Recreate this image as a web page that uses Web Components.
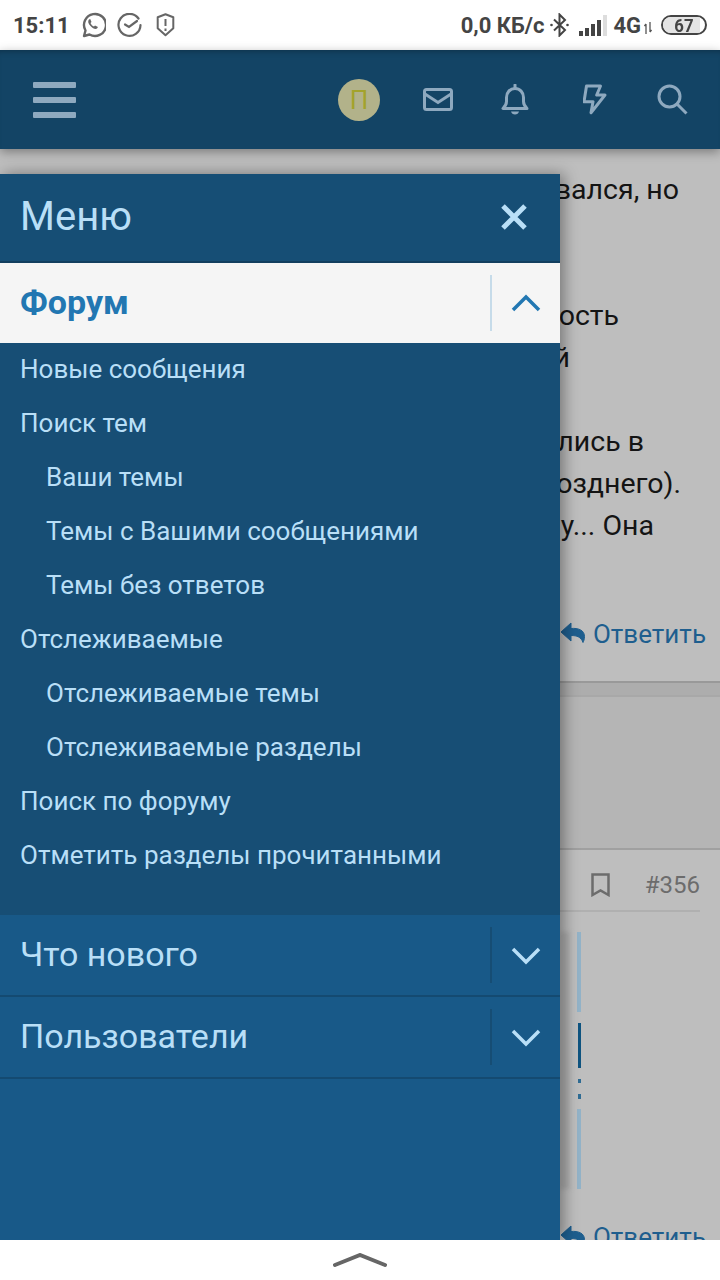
<!DOCTYPE html>
<html lang="ru">
<head>
<meta charset="utf-8">
<title>Меню</title>
<style>
  html, body { margin: 0; padding: 0; }
  body { width: 720px; height: 1280px; overflow: hidden; font-family: Roboto, "Liberation Sans", sans-serif; background: #fff; }
  app-shell { height: 1280px; }
</style>
</head>
<body>
<app-shell>
  <status-bar slot="status"></status-bar>
  <top-bar slot="top"></top-bar>
  <thread-page slot="page"></thread-page>
  <nav-panel slot="panel">
    <nav-head>Меню</nav-head>
    <nav-section open label="Форум">
      <nav-link>Новые сообщения</nav-link>
      <nav-link>Поиск тем</nav-link>
      <nav-link sub>Ваши темы</nav-link>
      <nav-link sub>Темы с Вашими сообщениями</nav-link>
      <nav-link sub>Темы без ответов</nav-link>
      <nav-link>Отслеживаемые</nav-link>
      <nav-link sub>Отслеживаемые темы</nav-link>
      <nav-link sub>Отслеживаемые разделы</nav-link>
      <nav-link>Поиск по форуму</nav-link>
      <nav-link>Отметить разделы прочитанными</nav-link>
    </nav-section>
    <nav-section label="Что нового"></nav-section>
    <nav-section label="Пользователи"></nav-section>
  </nav-panel>
  <gesture-bar slot="gesture"></gesture-bar>
</app-shell>

<script>
  class AppShell extends HTMLElement {
    constructor() {
      super();
      this.attachShadow({ mode: 'open' });
      this.shadowRoot.innerHTML = `
        <style>
          :host { display: flex; flex-direction: column; }
          .main { position: relative; flex: 1; overflow: hidden; background: #bebebe; min-height: 0; }
          .over { position: absolute; left: 0; top: 25px; bottom: 0; width: 560px; display: flex; }
        </style>
        <slot name="status"></slot>
        <slot name="top"></slot>
        <div class="main">
          <slot name="page"></slot>
          <div class="over"><slot name="panel"></slot></div>
        </div>
        <slot name="gesture"></slot>
      `;
    }
  }

  class StatusBar extends HTMLElement {
    constructor() {
      super();
      this.attachShadow({ mode: 'open' });
      this.shadowRoot.innerHTML = `
        <style>
          :host { display: flex; align-items: center; height: 50px; background: #fff; color: #444; font: 700 22px Roboto, sans-serif; padding: 0 13px; box-sizing: border-box; }
          svg { display: block; flex: none; }
          .time { margin-right: 11px; }
          .left { display: flex; align-items: center; }
          .right { margin-left: auto; display: flex; align-items: center; }
          .batt { position: relative; width: 46px; height: 20px; box-sizing: border-box; border: 2.5px solid #444; border-radius: 10px; margin-left: 9px; display: flex; align-items: center; justify-content: center; font: 700 19px Roboto, sans-serif; overflow: hidden; }
          .batt i { position: absolute; left: 0; top: 0; bottom: 0; width: 88%; background: #e4e4e4; }
          .batt span { position: relative; transform: scaleX(.88); }
        </style>
        <div class="left">
          <span class="time">15:11</span>
          <svg width="25" height="26" viewBox="0 0 25 26" fill="none" stroke="#666" stroke-width="2.4">
            <path d="M3 24l1.500-5.500A11 11 0 1 1 8.500 22.500z" stroke-linejoin="round"/>
            <path d="M8 7.500c-1.500 1.500-.8 4 1.500 6.500s5 3.500 6.500 2.500l1-1.500-3-1.500-1 1c-1.500-.5-3-2-3.500-3.500l1-1-1.300-3z" fill="#666" stroke="none"/>
          </svg>
          <svg width="25" height="25" viewBox="0 0 25 25" fill="none" stroke="#666" stroke-width="2.200" stroke-linecap="round" style="margin-left:11px">
            <path d="M21.500 5.500A11 11 0 1 0 23.500 12"/>
            <path d="M8 11.500l4 2.500 8-6"/>
          </svg>
          <svg width="19" height="24" viewBox="0 0 19 24" fill="none" stroke="#666" stroke-width="2" style="margin-left:14px">
            <path d="M9.500 1.200l7.800 3v11l-7.800 7-7.800-7v-11z" stroke-linejoin="round"/>
            <path d="M9.500 6v7M9.500 15.500v2.500"/>
          </svg>
        </div>
        <div class="right">
          <span>0,0 КБ/с</span>
          <svg width="19" height="24" viewBox="0 0 19 24" fill="none" stroke="#444" stroke-width="2" style="margin-left:6px">
            <path d="M4 6.500l11 10.500-5.500 5.500V1.500L15 7 4 17.500"/>
            <circle cx="1.500" cy="12" r="1.300" fill="#444" stroke="none"/><circle cx="17.500" cy="12" r="1.300" fill="#444" stroke="none"/>
          </svg>
          <svg width="28" height="21" viewBox="0 0 28 21" style="margin-left:10px">
            <rect x="0" y="16" width="4" height="5" fill="#444"/><rect x="6" y="13" width="4" height="8" fill="#444"/><rect x="12" y="9" width="4" height="12" fill="#444"/><rect x="18" y="5" width="4" height="16" fill="#444"/><rect x="24" y="0" width="4" height="21" fill="#ddd"/>
          </svg>
          <span style="margin-left:6px">4G</span>
          <svg width="8" height="12" viewBox="0 0 8 12" fill="none" stroke="#555" stroke-width="1.300" style="margin:6px 0 0 3px">
            <path d="M2 12V2M0.500 4L2 2M6 0v10M6 10l1.500-2"/>
          </svg>
          <div class="batt"><i></i><span>67</span></div>
        </div>
      `;
    }
  }

  class TopBar extends HTMLElement {
    constructor() {
      super();
      this.attachShadow({ mode: 'open' });
      this.shadowRoot.innerHTML = `
        <style>
          :host { display: flex; align-items: center; position: relative; z-index: 2; height: 99px; background: #134465; box-shadow: inset 0 6px 6px -5px rgba(0,0,0,.3), 0 3px 10px rgba(0,0,0,.35); padding: 0 32px 0 33px; box-sizing: border-box; }
          svg { display: block; flex: none; }
          .burger { display: flex; flex-direction: column; gap: 9px; width: 43px; }
          .burger i { height: 6px; background: #8ea9bf; border-radius: 1px; }
          .right { margin-left: auto; display: flex; align-items: center; }
          .avatar { width: 42px; height: 42px; border-radius: 50%; background: #b2b28a; color: #a3a32c; font: 400 26px/42px Roboto, sans-serif; text-align: center; }
        </style>
        <div class="burger"><i></i><i></i><i></i></div>
        <div class="right">
          <div class="avatar">П</div>
          <svg width="30" height="23" viewBox="0 0 30 23" fill="none" stroke="#8ea9bf" stroke-width="3" style="margin:-1px 0 0 43px">
            <rect x="1.500" y="1.500" width="27" height="20" rx="2"/>
            <path d="M2 6l13 8.500L28 6"/>
          </svg>
          <svg width="28" height="31" viewBox="0 0 28 31" fill="none" stroke="#8ea9bf" stroke-width="3" style="margin-left:48px">
            <path d="M14 4.500c-5 0-8.500 4-8.500 9v4c0 3-1.500 5-3.500 7h24c-2-2-3.500-4-3.500-7v-4c0-5-3.500-9-8.500-9z" stroke-linejoin="round"/>
            <path d="M14 1v3" stroke-linecap="round"/>
            <path d="M10 27.500h8c-.5 2-2 3-4 3s-3.500-1-4-3z" fill="#8ea9bf" stroke="none"/>
          </svg>
          <svg width="24" height="31" viewBox="0 0 24 31" fill="none" stroke="#8ea9bf" stroke-width="3" stroke-linejoin="round" style="margin-left:54px">
            <path d="M3.500 2H17.500L13.700 11H22L8 28.700 10 17.700H1z"/>
          </svg>
          <svg width="31" height="31" viewBox="0 0 31 31" fill="none" stroke="#8ea9bf" stroke-width="3" style="margin-left:50px">
            <circle cx="12.500" cy="12.500" r="10.500"/>
            <path d="M20 20l9.500 9.500"/>
          </svg>
        </div>
      `;
    }
  }

  class ThreadPage extends HTMLElement {
    constructor() {
      super();
      this.attachShadow({ mode: 'open' });
      const reply = `
        <svg width="27" height="24" viewBox="0 0 27 24"><path d="M11 1L1 10l10 9v-5.500c6 0 10 1.500 12 7 .5-1 1.500-3 1.500-6C24.500 8 18 5.800 11 6.500z" fill="#1e5e8e" stroke="#1e5e8e" stroke-width="1" stroke-linejoin="round"/></svg>
        <span>Ответить</span>`;
      const lines = [
        ['вался, но', 41], ['', 0], ['', 0], ['ость', 101], ['й', 150], ['', 0],
        ['лись в', 76], ['озднего).', 39], ['у... Она', 66]
      ];
      this.shadowRoot.innerHTML = `
        <style>
          :host { display: block; color: #141414; font-family: Roboto, sans-serif; }
          .text { padding-top: 20px; font-size: 28.5px; }
          .text div { height: 42px; line-height: 42px; text-align: right; white-space: nowrap; }
          .reply { display: flex; justify-content: flex-end; align-items: center; gap: 6px; height: 30px; padding-right: 14px; color: #1e5e8e; font-size: 26px; }
          .reply svg { display: block; }
          .r1 { margin-top: 72px; }
          .band { margin-top: 32px; height: 12px; background: #adadad; border-top: 2px solid #999; border-bottom: 2px solid #a8a8a8; }
          .gap { height: 151px; background: #b5b5b5; border-bottom: 2px solid #a0a0a0; }
          .head { display: flex; justify-content: flex-end; align-items: center; margin-right: 20px; padding-top: 9px; border-bottom: 2px solid #b0b0b0; color: #6c6c6c; font-size: 24px; gap: 35px; box-sizing: border-box; height: 62px; }
          .post { display: flex; margin: 20px 0 0 560px; height: 257px; }
          .smear { width: 10px; background: #aeaeae; filter: blur(2px); }
          .strip { margin-left: 7px; width: 5px; display: flex; flex-direction: column; filter: blur(.4px); }
          .strip i { display: block; flex: none; }
          .r2 { margin-top: 33px; }
        </style>
        <div class="text">${lines.map(l => `<div style="padding-right:${l[1]}px">${l[0]}</div>`).join('')}</div>
        <div class="reply r1">${reply}</div>
        <div class="band"></div>
        <div class="gap"></div>
        <div class="head">
          <svg width="19" height="24" viewBox="0 0 19 24" fill="none" stroke="#6c6c6c" stroke-width="2.500"><path d="M1.500 1.500h16v20.500l-8-4.500-8 4.500z"/></svg>
          <span>#356</span>
        </div>
        <div class="post">
          <div class="smear"></div>
          <div class="strip">
            <i style="height:80px;width:4px;background:#93b3c8"></i>
            <i style="height:45px;width:3px;margin:11px 0 0 1px;background:#0f5480"></i>
            <i style="height:4px;width:3px;margin:11px 0 0 1px;background:#2f6c94"></i>
            <i style="height:5px;width:3px;margin:11px 0 0 1px;background:#2f6c94"></i>
            <i style="height:80px;width:4px;margin:10px 0 0 0;background:#93b3c8"></i>
          </div>
        </div>
        <div class="reply r2">${reply}</div>
      `;
    }
  }

  class NavPanel extends HTMLElement {
    constructor() {
      super();
      this.attachShadow({ mode: 'open' });
      this.shadowRoot.innerHTML = `
        <style>
          :host { display: block; flex: 1; background: #185988; box-shadow: 4px 0 14px rgba(0,0,0,.38); }
        </style>
        <slot></slot>
      `;
    }
  }

  class NavHead extends HTMLElement {
    constructor() {
      super();
      this.attachShadow({ mode: 'open' });
      this.shadowRoot.innerHTML = `
        <style>
          :host { display: flex; align-items: center; justify-content: space-between; box-sizing: border-box; height: 89px; padding: 0 33px 2px 20px; background: #164e75; border-bottom: 2px solid #123f5f; color: #b9dff7; font: 400 40px Roboto, sans-serif; }
          svg { display: block; }
        </style>
        <slot></slot>
        <svg width="26" height="26" viewBox="0 0 26 26" stroke="#b9dff7" stroke-width="5"><path d="M2 2l22 22M24 2L2 24"/></svg>
      `;
    }
  }

  class NavSection extends HTMLElement {
    constructor() {
      super();
      this.attachShadow({ mode: 'open' });
    }

    connectedCallback() {
      const open = this.hasAttribute('open');
      const chevron = open ? 'M2 16L15 3l13 13' : 'M2 3l13 13L28 3';
      this.shadowRoot.innerHTML = `
        <style>
          :host { display: block; }
          .row { display: flex; align-items: center; box-sizing: border-box; height: ${open ? 80 : 82}px; padding-left: 20px; }
          .row.open { background: #f5f5f5; color: #2277b2; font: 700 34px Roboto, sans-serif; }
          .row.closed { background: #185988; color: #b9dff7; font: 400 34px Roboto, sans-serif; border-bottom: 2px solid #144a71; }
          .row span { margin-bottom: 2px; }
          .sep { margin-left: auto; width: 2px; height: 56px; background: ${open ? '#c6dbe9' : '#164d74'}; }
          .chev { width: 68px; display: flex; justify-content: center; }
          svg { display: block; }
          .list { background: #174e75; padding-bottom: 32px; }
        </style>
        <div class="row ${open ? 'open' : 'closed'}">
          <span>${this.getAttribute('label')}</span>
          <div class="sep"></div>
          <div class="chev"><svg width="30" height="19" viewBox="0 0 30 19" fill="none" stroke="${open ? '#2277b2' : '#b9dff7'}" stroke-width="3.500"><path d="${chevron}"/></svg></div>
        </div>
        ${open ? '<div class="list"><slot></slot></div>' : ''}
      `;
    }
  }

  class NavLink extends HTMLElement {
    constructor() {
      super();
      this.attachShadow({ mode: 'open' });
      this.shadowRoot.innerHTML = `
        <style>
          :host { display: block; height: 54px; padding-left: 20px; color: #b9dff7; font: 400 26px/53px Roboto, sans-serif; }
          :host([sub]) { padding-left: 46px; }
        </style>
        <slot></slot>
      `;
    }
  }

  class GestureBar extends HTMLElement {
    constructor() {
      super();
      this.attachShadow({ mode: 'open' });
      this.shadowRoot.innerHTML = `
        <style>
          :host { display: flex; justify-content: center; position: relative; height: 40px; background: #fff; padding-top: 13px; box-sizing: border-box; }
          svg { display: block; }
        </style>
        <svg width="54" height="15" viewBox="0 0 54 15" fill="none" stroke="#666" stroke-width="4" stroke-linecap="round"><path d="M2 12L27 2l25 10"/></svg>
      `;
    }
  }

  customElements.define('app-shell', AppShell);
  customElements.define('status-bar', StatusBar);
  customElements.define('top-bar', TopBar);
  customElements.define('thread-page', ThreadPage);
  customElements.define('nav-panel', NavPanel);
  customElements.define('nav-head', NavHead);
  customElements.define('nav-section', NavSection);
  customElements.define('nav-link', NavLink);
  customElements.define('gesture-bar', GestureBar);
</script>
</body>
</html>
